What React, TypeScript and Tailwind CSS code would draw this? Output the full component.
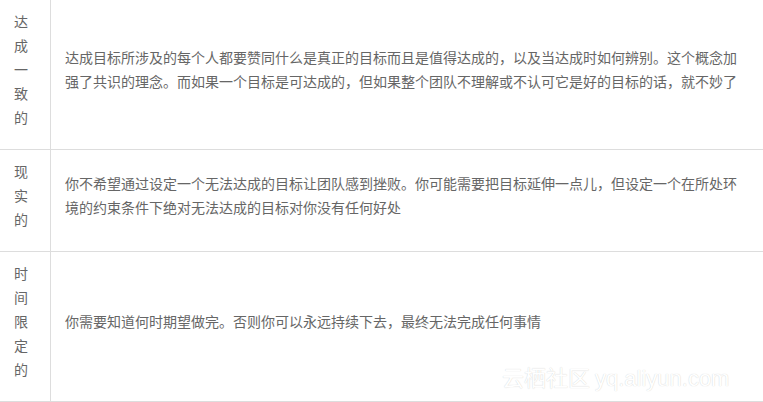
import React from 'react'

const rows = [
    {
        label: ['达', '成', '一', '致', '的'],
        text: '达成目标所涉及的每个人都要赞同什么是真正的目标而且是值得达成的，以及当达成时如何辨别。这个概念加强了共识的理念。而如果一个目标是可达成的，但如果整个团队不理解或不认可它是好的目标的话，就不妙了',
    },
    {
        label: ['现', '实', '的'],
        text: '你不希望通过设定一个无法达成的目标让团队感到挫败。你可能需要把目标延伸一点儿，但设定一个在所处环境的约束条件下绝对无法达成的目标对你没有任何好处',
    },
    {
        label: ['时', '间', '限', '定', '的'],
        text: '你需要知道何时期望做完。否则你可以永远持续下去，最终无法完成任何事情',
    },
]

export default function App() {
    return (
        <div className="relative w-[763px] h-[402px] overflow-hidden bg-white text-[#666] text-[14px] leading-[24px] [font-family:'Noto_Sans_CJK_SC',sans-serif]">
            {rows.map((row, index) => (
                <div key={index} className="flex border-b border-[#ddd]">
                    <div className="w-[51px] shrink-0 border-r border-[#ddd] pl-[14px] pt-[9px] pb-[20px]">
                        {row.label.map((ch, i) => (
                            <div key={i}>{ch}</div>
                        ))}
                    </div>
                    <div className="flex-1 flex items-center pl-[14px] pr-[14px] pt-[9px] pb-[20px]">
                        <p>{row.text}</p>
                    </div>
                </div>
            ))}

            {/* watermark */}
            <div className="absolute left-[502px] top-[365px] text-[22px] leading-none text-white whitespace-nowrap [text-shadow:0_0_1px_rgba(0,0,0,0.22)] [font-family:'Noto_Sans_CJK_SC',sans-serif]">
                云栖社区 <span className="[font-family:'Liberation_Sans',sans-serif]">yq.aliyun.com</span>
            </div>
        </div>
    )
}
